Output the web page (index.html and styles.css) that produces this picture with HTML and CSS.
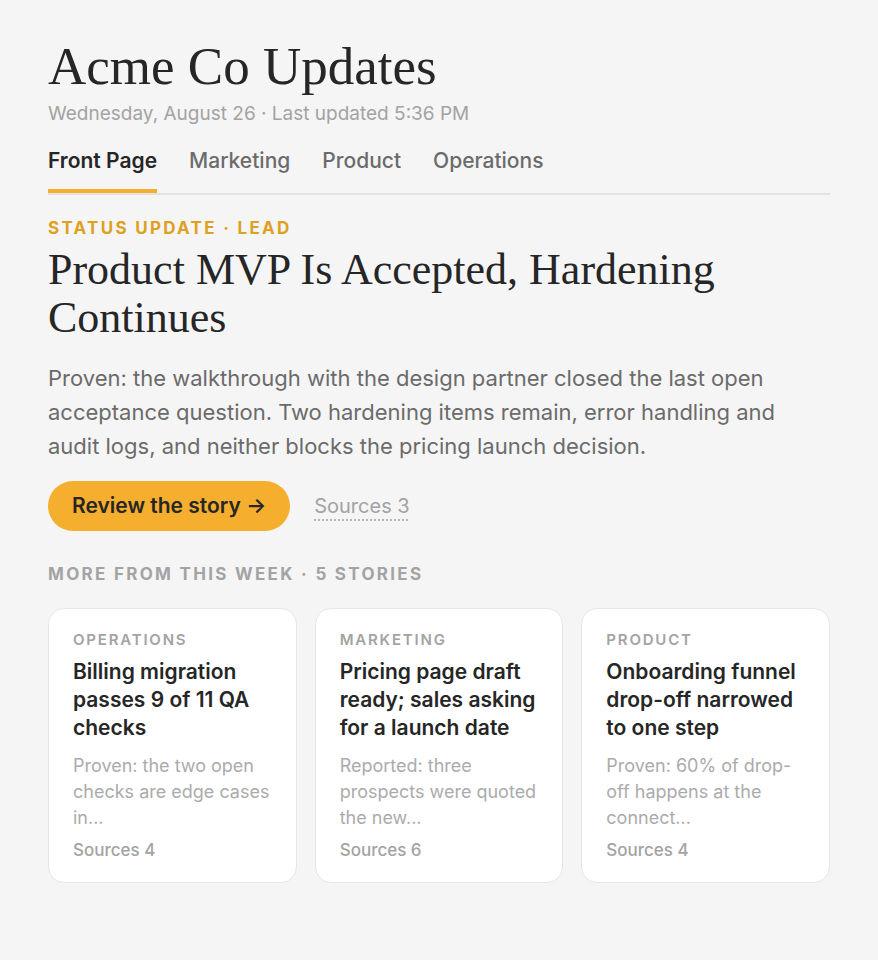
FILE: index.html
```html
<!DOCTYPE html>
<html lang="en">
<head>
  <meta charset="UTF-8">
  <meta name="viewport" content="width=device-width, initial-scale=1.0">
  <title>Acme Co Updates</title>
  <link rel="stylesheet" href="styles.css">
</head>
<body>
  <div class="page">
    <header class="masthead">
      <h1 class="brand">Acme Co Updates</h1>
      <p class="dateline">Wednesday, August 26 · Last updated 5:36 PM</p>
      <nav class="tabs">
        <a class="tab active" href="#">Front Page</a>
        <a class="tab" href="#">Marketing</a>
        <a class="tab" href="#">Product</a>
        <a class="tab" href="#">Operations</a>
      </nav>
    </header>

    <!-- Lead story -->
    <section class="lead">
      <p class="kicker">Status Update · Lead</p>
      <h2 class="headline">Product MVP Is Accepted, Hardening Continues</h2>
      <p class="summary">Proven: the walkthrough with the design partner closed the last open acceptance question. Two hardening items remain, error handling and audit logs, and neither blocks the pricing launch decision.</p>
      <div class="actions">
        <a class="btn-review" href="#">Review the story →</a>
        <a class="sources-link" href="#">Sources 3</a>
      </div>
    </section>

    <!-- More stories -->
    <section class="more">
      <p class="section-label">More from this week · 5 stories</p>
      <div class="cards">
        <article class="card">
          <p class="card-tag">Operations</p>
          <h3 class="card-title">Billing migration passes 9 of 11 QA checks</h3>
          <p class="card-text">Proven: the two open checks are edge cases in...</p>
          <p class="card-sources">Sources 4</p>
        </article>
        <article class="card">
          <p class="card-tag">Marketing</p>
          <h3 class="card-title">Pricing page draft ready; sales asking for a launch date</h3>
          <p class="card-text">Reported: three prospects were quoted the new...</p>
          <p class="card-sources">Sources 6</p>
        </article>
        <article class="card">
          <p class="card-tag">Product</p>
          <h3 class="card-title">Onboarding funnel drop-off narrowed to one step</h3>
          <p class="card-text">Proven: 60% of drop-off happens at the connect...</p>
          <p class="card-sources">Sources 4</p>
        </article>
      </div>
    </section>
  </div>
</body>
</html>
```

FILE: styles.css
```css
body {
  margin: 0;
  background: #f5f5f5;
  font-family: Inter, "Noto Sans", sans-serif;
  color: #262626;
}

.page {
  padding: 36px 48px 48px;
}

.brand {
  margin: 0;
  font-family: "Liberation Serif", serif;
  font-weight: 400;
  font-size: 53px;
  line-height: 60px;
  color: #262626;
}

.dateline {
  margin: 6px 0 0;
  font-size: 19px;
  line-height: 24px;
  color: #a3a3a3;
}

.tabs {
  display: flex;
  gap: 32px;
  margin-top: 23px;
  border-bottom: 2px solid #e2e2e2;
}

.tab {
  padding-bottom: 16px;
  border-bottom: 4px solid transparent;
  font-size: 21px;
  line-height: 24px;
  font-weight: 500;
  color: #6b6b6b;
  text-decoration: none;
}

.tab.active {
  color: #262626;
  font-weight: 600;
  border-bottom-color: #f5ae2d;
}

.kicker {
  margin: 22px 0 0;
  font-size: 17px;
  line-height: 22px;
  font-weight: 700;
  letter-spacing: 2.3px;
  text-transform: uppercase;
  color: #dea01e;
}

.headline {
  margin: 7px 0 0;
  font-family: "Liberation Serif", serif;
  font-weight: 400;
  font-size: 44px;
  line-height: 48px;
  color: #262626;
}

.summary {
  margin: 19px 0 0;
  font-size: 22px;
  line-height: 34px;
  color: #6b6b6b;
}

.actions {
  display: flex;
  align-items: center;
  gap: 24px;
  margin-top: 18px;
}

.btn-review {
  padding: 13px 24px;
  border-radius: 999px;
  background: #f5ae2d;
  font-size: 21px;
  line-height: 24px;
  font-weight: 600;
  color: #262626;
  text-decoration: none;
}

.sources-link {
  font-size: 20px;
  line-height: 24px;
  color: #a3a3a3;
  text-decoration: underline dotted #b5b5b5;
  text-decoration-thickness: 2px;
  text-underline-offset: 6px;
}

.section-label {
  margin: 32px 0 0;
  font-size: 17px;
  line-height: 22px;
  font-weight: 700;
  letter-spacing: 2.3px;
  text-transform: uppercase;
  color: #a3a3a3;
}

.cards {
  display: grid;
  grid-template-columns: repeat(3, 1fr);
  gap: 18px;
  margin-top: 23px;
}

.card {
  padding: 21px 24px 20px;
  background: #fff;
  border: 1px solid #e6e6e6;
  border-radius: 16px;
}

.card-tag {
  margin: 0;
  font-size: 15px;
  line-height: 20px;
  font-weight: 600;
  letter-spacing: 1.8px;
  text-transform: uppercase;
  color: #a3a3a3;
}

.card-title {
  margin: 8px 0 0;
  font-size: 21px;
  line-height: 28px;
  font-weight: 600;
  color: #262626;
}

.card-text {
  margin: 11px 0 0;
  font-size: 18px;
  line-height: 26px;
  color: #ababab;
}

.card-sources {
  margin: 7px 0 0;
  font-size: 17px;
  line-height: 24px;
  font-weight: 500;
  color: #a3a3a3;
}
```
